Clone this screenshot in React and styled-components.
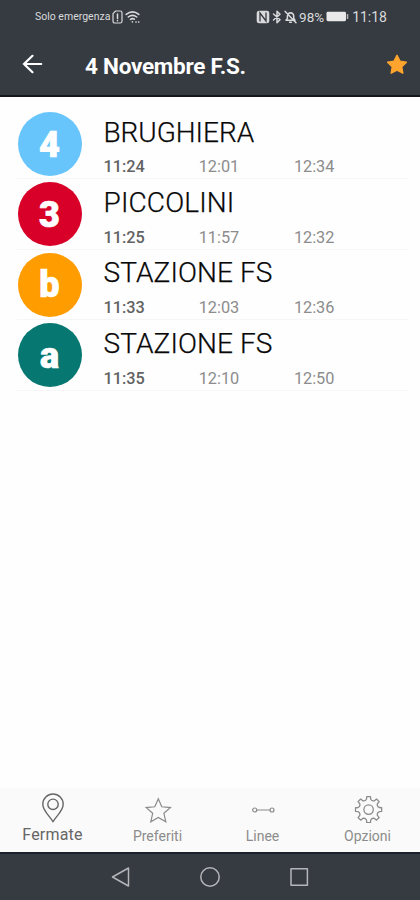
import React from "react";
import styled, { createGlobalStyle } from "styled-components";

const GlobalStyle = createGlobalStyle`
  * { box-sizing: border-box; }
  body { margin: 0; background: #fff; font-family: Roboto, "Liberation Sans", sans-serif; }
`;

const Screen = styled.main`
  display: flex;
  flex-direction: column;
  width: 420px;
  height: 900px;
  overflow: hidden;
  background: #fefefe;
`;

const TopArea = styled.header`
  flex: none;
  height: 97px;
  background: #363a41;
  border-bottom: 2px solid #14171c;
  color: #fff;
`;

const StatusBar = styled.div`
  display: flex;
  justify-content: space-between;
  align-items: center;
  height: 33px;
  padding: 0 33px 0 35px;
  color: #d9dadc;
`;

const StatusGroup = styled.div`
  display: flex;
  align-items: center;
  gap: ${(p) => p.$gap}px;
`;

const StatusText = styled.span`
  font-size: ${(p) => p.$size}px;
  line-height: 16px;
  letter-spacing: ${(p) => p.$spacing || 0}px;
  margin-left: ${(p) => p.$before || 0}px;
  white-space: nowrap;
`;

const TitleBar = styled.div`
  display: flex;
  align-items: center;
  height: 62px;
  padding: 0 11px 0 21px;
`;

const IconButton = styled.button`
  display: flex;
  padding: 0;
  border: 0;
  background: none;
  color: inherit;
`;

const Title = styled.h1`
  flex: 1;
  margin: 3px 0 0 40px;
  font-size: 22.5px;
  line-height: 30px;
  font-weight: 700;
  letter-spacing: -0.25px;
  white-space: nowrap;
`;

const LineList = styled.ul`
  flex: 1;
  margin: 0;
  padding: 12px 11px 0 17px;
  list-style: none;
`;

const LineRow = styled.li`
  display: flex;
  height: 70.4px;
  border-bottom: 1px solid #f6f6f6;
`;

const LineBadge = styled.div`
  flex: none;
  display: flex;
  align-items: center;
  justify-content: center;
  width: 64px;
  height: 64px;
  margin: 3px 0 0 0.5px;
  padding-top: 1px;
  border-radius: 50%;
  background: ${(p) => p.$color};
  color: #fff;
  font-family: Roboto, sans-serif;
  font-size: 36px;
  line-height: 64px;
  font-weight: 900;
  -webkit-text-stroke: 0.7px #fff;
`;

const LineInfo = styled.div`
  margin-left: 22px;
`;

const Destination = styled.h2`
  margin: 7.6px 0 0;
  font-size: 28px;
  line-height: 32px;
  font-weight: 300;
  letter-spacing: ${(p) => p.$spacing}px;
  color: #080808;
  -webkit-text-stroke: 0.25px #080808;
  white-space: nowrap;
`;

const Times = styled.div`
  display: grid;
  grid-template-columns: repeat(3, 95.2px);
  margin-top: 8.8px;
`;

const Time = styled.time`
  font-size: 16.3px;
  line-height: 20px;
  font-weight: ${(p) => (p.$next ? 500 : 400)};
  color: ${(p) => (p.$next ? "#626262" : "#8c8c8c")};
`;

const TabBar = styled.nav`
  flex: none;
  display: grid;
  grid-template-columns: repeat(4, 1fr);
  height: 64px;
  background: #fafafa;
`;

const Tab = styled.a`
  display: flex;
  flex-direction: column;
  align-items: center;
  padding-top: 4px;
  color: ${(p) => (p.$active ? "#666" : "#8c8c8c")};
`;

const TabLabel = styled.span`
  margin-top: ${(p) => (p.$active ? 2 : 2.5)}px;
  font-size: ${(p) => (p.$active ? 16 : 14)}px;
  line-height: 20px;
  letter-spacing: ${(p) => p.$spacing}px;
`;

const SystemBar = styled.footer`
  flex: none;
  display: flex;
  align-items: center;
  justify-content: center;
  gap: 67px;
  height: 48px;
  border-top: 2px solid #1c222c;
  background: #363a41;
  color: #b4b6b9;
`;

function starPath(cx, cy, outer, inner) {
  const pts = Array.from({ length: 10 }, (_, i) => {
    const r = i % 2 ? inner : outer;
    const a = -Math.PI / 2 + (i * Math.PI) / 5;
    return `${(cx + r * Math.cos(a)).toFixed(2)} ${(cy + r * Math.sin(a)).toFixed(2)}`;
  });
  return `M${pts.join("L")}Z`;
}

function polar(c, r, a) {
  return `${(c + r * Math.cos(a)).toFixed(2)} ${(c + r * Math.sin(a)).toFixed(2)}`;
}

function gearPath(c, outer, inner) {
  let d = "";
  for (let i = 0; i < 8; i += 1) {
    const a = (i * Math.PI) / 4;
    d += `${i ? "L" : "M"}${polar(c, inner + 0.8, a - 0.2)}L${polar(c, outer, a - 0.14)}`;
    d += `L${polar(c, outer, a + 0.14)}L${polar(c, inner + 0.8, a + 0.2)}`;
    d += `Q${polar(c, inner - 1, a + Math.PI / 8)} ${polar(c, inner + 0.8, a + Math.PI / 4 - 0.2)}`;
  }
  return `${d}Z`;
}

const line = { fill: "none", stroke: "currentColor", strokeLinejoin: "round", strokeLinecap: "round" };

const SimIcon = () => (
  <svg width="11" height="14" viewBox="0 0 11 14" {...line} strokeWidth="1.2">
    <path d="M3.6 1H8.2Q10 1 10 2.8V11.2Q10 13 8.2 13H2.8Q1 13 1 11.2V3.6Z" />
    <path d="M5.5 4V8.4M5.5 10.4V10.7" strokeWidth="1.5" />
  </svg>
);

const WifiIcon = () => (
  <svg width="16" height="14" viewBox="0 0 16 14" {...line} strokeWidth="1.6">
    <path d="M1.2 4.4Q7.5-.8 13.8 4.4M3.3 7Q7.5 3.6 11.7 7M5.5 9.4Q7.5 8 9.3 9.2" />
    <path d="M7.4 11.8V12M10.9 12H11.1M13.6 12H13.8" />
  </svg>
);

const NfcIcon = () => (
  <svg width="14" height="14" viewBox="0 0 14 14" fill="none">
    <rect x=".7" y=".7" width="12.6" height="12.6" rx="2.4" fill="#d9dadc" />
    <path d="M4 11.5V3L10 11V2.5" stroke="#363a41" strokeWidth="1.3" />
  </svg>
);

const BluetoothIcon = () => (
  <svg width="10" height="14" viewBox="0 0 10 14" {...line} strokeWidth="1.5">
    <path d="M1.5 4L8 9.7L5 12.8V1.2L8 4.3L1.5 10" />
  </svg>
);

const BellOffIcon = () => (
  <svg width="13" height="14" viewBox="0 0 13 14" {...line} strokeWidth="1.5">
    <path d="M2 10.2H11L9.7 8.4V5.8Q9.5 3 6.5 2.7Q4 3 3.4 5.8V8.4L2 10.2M5.6 12.3H7.4M1.2 1.4L12 12.7" />
  </svg>
);

const BatteryIcon = () => (
  <svg width="23" height="11" viewBox="0 0 23 11" fill="#e9e9ea">
    <rect x=".5" y=".8" width="19.5" height="9.4" rx="1.4" />
    <rect x="20.8" y="3" width="1.5" height="5" rx=".5" fill="#b4b6b9" />
  </svg>
);

const BackIcon = () => (
  <svg width="24" height="24" viewBox="0 0 24 24" fill="none" stroke="currentColor" strokeWidth="2.2" strokeLinecap="round">
    <path d="M20.2 12H3M11.5 3.8L3 12L11.5 20.2" />
  </svg>
);

const FavoriteIcon = () => (
  <svg width="24" height="24" viewBox="0 0 24 24">
    <path d={starPath(12, 13.2, 9.9, 5)} fill="#ffa52e" stroke="#ffa52e" strokeWidth="1.4" strokeLinejoin="round" />
  </svg>
);

const PinIcon = () => (
  <svg width="30" height="31" viewBox="0 0 30 31" {...line} strokeWidth="1.4">
    <path d="M15 29.8C13.2 25.6 4.8 19.1 4.8 12.2A10.2 10.2 0 0 1 25.2 12.2C25.2 19.1 16.8 25.6 15 29.8Z" />
    <circle cx="15" cy="12.3" r="5.2" />
  </svg>
);

const StarIcon = () => (
  <svg width="30" height="31" viewBox="0 0 30 31" {...line} strokeWidth="1.2" strokeLinejoin="miter">
    <path d={starPath(15.3, 19.5, 12.8, 5.9)} />
  </svg>
);

const RouteIcon = () => (
  <svg width="30" height="31" viewBox="0 0 30 31" {...line} strokeWidth="1.2">
    <circle cx="6.7" cy="18" r="2" />
    <circle cx="24" cy="18" r="2" />
    <path d="M8.7 18H22" />
  </svg>
);

const GearIcon = () => (
  <svg width="30" height="31" viewBox="0 0 30 31" {...line} strokeWidth="1.3">
    <g transform="translate(.6 2.6)">
      <path d={gearPath(15, 13.2, 9.8)} />
      <circle cx="15" cy="15" r="4.7" />
    </g>
  </svg>
);

const LINES = [
  { id: "4", color: "#68c5fb", name: "BRUGHIERA", spacing: -0.05, times: ["11:24", "12:01", "12:34"] },
  { id: "3", color: "#d80028", name: "PICCOLINI", spacing: 0.15, times: ["11:25", "11:57", "12:32"] },
  { id: "b", color: "#ff9c00", name: "STAZIONE FS", spacing: 0.1, times: ["11:33", "12:03", "12:36"] },
  { id: "a", color: "#067771", name: "STAZIONE FS", spacing: 0.1, times: ["11:35", "12:10", "12:50"] },
];

const TABS = [
  { label: "Fermate", Icon: PinIcon, active: true, spacing: 0.2 },
  { label: "Preferiti", Icon: StarIcon, spacing: 0 },
  { label: "Linee", Icon: RouteIcon, spacing: 0 },
  { label: "Opzioni", Icon: GearIcon, spacing: 0 },
];

export default function App() {
  return (
    <Screen>
      <GlobalStyle />
      <TopArea>
        <StatusBar>
          <StatusGroup $gap={2}>
            <StatusText $size={10.5}>Solo emergenza</StatusText>
            <SimIcon />
            <WifiIcon />
          </StatusGroup>
          <StatusGroup $gap={2}>
            <NfcIcon />
            <BluetoothIcon />
            <BellOffIcon />
            <StatusText $size={13.5}>98%</StatusText>
            <BatteryIcon />
            <StatusText $size={14} $before={1}>11:18</StatusText>
          </StatusGroup>
        </StatusBar>
        <TitleBar>
          <IconButton aria-label="Indietro"><BackIcon /></IconButton>
          <Title>4 Novembre F.S.</Title>
          <IconButton aria-label="Preferito"><FavoriteIcon /></IconButton>
        </TitleBar>
      </TopArea>
      <LineList>
        {LINES.map((l) => (
          <LineRow key={l.id}>
            <LineBadge $color={l.color}>{l.id}</LineBadge>
            <LineInfo>
              <Destination $spacing={l.spacing}>{l.name}</Destination>
              <Times>
                {l.times.map((t, i) => (
                  <Time key={t} $next={i === 0}>{t}</Time>
                ))}
              </Times>
            </LineInfo>
          </LineRow>
        ))}
      </LineList>
      <TabBar>
        {TABS.map(({ label, Icon, active, spacing }) => (
          <Tab key={label} $active={active}>
            <Icon />
            <TabLabel $active={active} $spacing={spacing}>{label}</TabLabel>
          </Tab>
        ))}
      </TabBar>
      <SystemBar>
        <svg width="22" height="22" viewBox="0 0 22 22" {...line} strokeWidth="1.5">
          <path d="M18.5 2V20L2.5 11Z" />
        </svg>
        <svg width="22" height="22" viewBox="0 0 22 22" {...line} strokeWidth="1.5">
          <circle cx="11" cy="11" r="9.2" />
        </svg>
        <svg width="22" height="22" viewBox="0 0 22 22" {...line} strokeWidth="1.5">
          <rect x="3" y="2.8" width="16.4" height="16.4" />
        </svg>
      </SystemBar>
    </Screen>
  );
}
